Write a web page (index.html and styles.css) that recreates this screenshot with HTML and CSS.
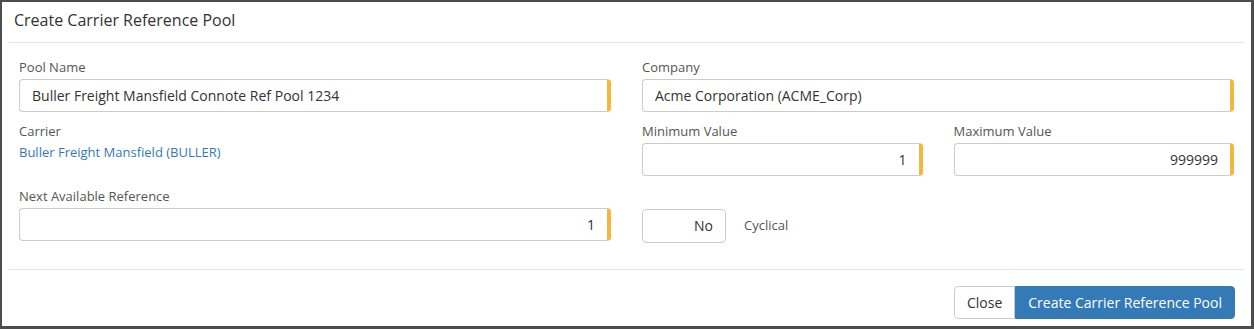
FILE: index.html
```html
<!DOCTYPE html>
<html lang="en">
<head>
    <meta charset="UTF-8">
    <meta name="viewport" content="width=device-width, initial-scale=1.0">
    <title>Create Carrier Reference Pool</title>
    <link rel="stylesheet" href="styles.css">
</head>
<body>
    <div class="modal">
        <div class="modal-header">
            <h4 class="modal-title">Create Carrier Reference Pool</h4>
        </div>
        <div class="modal-body">
            <div class="form-grid">
                <div class="field">
                    <label>Pool Name</label>
                    <input class="input required" type="text" value="Buller Freight Mansfield Connote Ref Pool 1234">
                </div>
                <div class="field">
                    <label>Company</label>
                    <input class="input required" type="text" value="Acme Corporation (ACME_Corp)">
                </div>

                <div class="field">
                    <label>Carrier</label>
                    <a class="static-link" href="#">Buller Freight Mansfield (BULLER)</a>
                </div>
                <div class="sub-grid">
                    <div class="field">
                        <label>Minimum Value</label>
                        <input class="input required num" type="text" value="1">
                    </div>
                    <div class="field">
                        <label>Maximum Value</label>
                        <input class="input required num" type="text" value="999999">
                    </div>
                </div>

                <div class="field last-row">
                    <label>Next Available Reference</label>
                    <input class="input required num" type="text" value="1">
                </div>
                <div class="toggle-row last-row">
                    <div class="toggle">No</div>
                    <span class="toggle-label">Cyclical</span>
                </div>
            </div>
        </div>
        <div class="modal-footer">
            <div class="btn-group">
                <button class="btn btn-default">Close</button>
                <button class="btn btn-primary">Create Carrier Reference Pool</button>
            </div>
        </div>
    </div>
</body>
</html>
```

FILE: styles.css
```css
html, body {
    margin: 0;
    padding: 0;
    background: #fff;
}
body {
    font-family: "Open Sans", "Liberation Sans", sans-serif;
    color: #333;
}
.modal {
    box-sizing: border-box;
    width: 1254px;
    height: 329px;
    border-style: solid;
    border-color: #4d4d4d;
    border-width: 2px 3px 3px 2px;
    background: #fff;
}
.modal-header {
    margin: 0 7px;
    padding: 0 5px;
    height: 40px;
    border-bottom: 1px solid #e5e5e5;
    display: flex;
    align-items: center;
}
.modal-title {
    margin: 0;
    font-size: 16px;
    font-weight: normal;
    color: #333;
    position: relative;
    top: -2px;
}
.modal-body {
    padding: 16px 17px 26px 17px;
}
.form-grid {
    display: grid;
    grid-template-columns: 1fr 1fr;
    column-gap: 31px;
    row-gap: 11px;
}
.last-row {
    margin-top: 1px;
}
.sub-grid {
    display: grid;
    grid-template-columns: 1fr 1fr;
    column-gap: 31px;
}
.field {
    display: flex;
    flex-direction: column;
}
.field label {
    font-size: 13px;
    line-height: 17px;
    color: #555;
    margin-bottom: 3px;
}
.input {
    box-sizing: border-box;
    height: 33px;
    width: 100%;
    padding: 6px 12px;
    font-family: inherit;
    font-size: 14px;
    color: #333;
    border: 1px solid #ccc;
    border-radius: 4px;
    background: #fff;
    outline: none;
}
.required {
    border-right: 4px solid #f5b73b;
}
.num {
    text-align: right;
}
.static-link {
    font-size: 13px;
    line-height: 17px;
    color: #337ab7;
    text-decoration: none;
    margin-top: 1px;
}
.toggle-row {
    display: flex;
    align-items: center;
    gap: 18px;
    padding-top: 21px;
}
.toggle {
    box-sizing: border-box;
    width: 84px;
    height: 34px;
    border: 1px solid #ccc;
    border-radius: 4px;
    font-size: 14px;
    color: #333;
    text-align: right;
    padding: 0 12px;
    line-height: 32px;
}
.toggle-label {
    font-size: 13px;
    color: #555;
    position: relative;
    top: -1px;
}
.modal-footer {
    margin: 0 7px;
    padding: 16px 9px 0 0;
    border-top: 1px solid #e5e5e5;
    display: flex;
    justify-content: flex-end;
}
.btn-group {
    display: flex;
}
.btn {
    box-sizing: border-box;
    height: 33px;
    padding: 0 12px;
    font-family: inherit;
    font-size: 14px;
    border: 1px solid #ccc;
    cursor: pointer;
}
.btn-default {
    background: #fff;
    color: #333;
    border-radius: 4px 0 0 4px;
}
.btn-primary {
    background: #337ab7;
    border-color: #337ab7;
    color: #fff;
    border-radius: 0 4px 4px 0;
}
```
